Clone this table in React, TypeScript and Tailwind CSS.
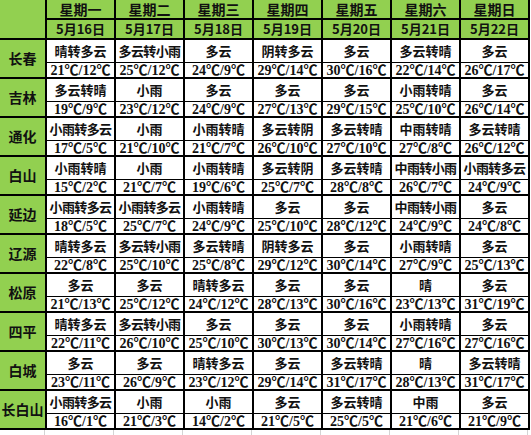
type Day = { week: string; date: string };
type Cell = { w: string; t: string };
type City = { name: string; cells: Cell[] };

const days: Day[] = [
  { week: "星期一", date: "5月16日" },
  { week: "星期二", date: "5月17日" },
  { week: "星期三", date: "5月18日" },
  { week: "星期四", date: "5月19日" },
  { week: "星期五", date: "5月20日" },
  { week: "星期六", date: "5月21日" },
  { week: "星期日", date: "5月22日" },
];

const c = (w: string, t: string): Cell => ({ w, t });

const cities: City[] = [
  {
    name: "长春",
    cells: [
      c("晴转多云", "21℃/12℃"),
      c("多云转小雨", "25℃/12℃"),
      c("多云", "24℃/9℃"),
      c("阴转多云", "29℃/14℃"),
      c("多云", "30℃/16℃"),
      c("多云转晴", "22℃/14℃"),
      c("多云", "26℃/17℃"),
    ],
  },
  {
    name: "吉林",
    cells: [
      c("多云转晴", "19℃/9℃"),
      c("小雨", "23℃/12℃"),
      c("多云", "24℃/9℃"),
      c("多云", "27℃/13℃"),
      c("多云", "29℃/15℃"),
      c("小雨转晴", "25℃/10℃"),
      c("多云", "26℃/14℃"),
    ],
  },
  {
    name: "通化",
    cells: [
      c("小雨转多云", "17℃/5℃"),
      c("小雨", "21℃/10℃"),
      c("小雨转晴", "21℃/7℃"),
      c("多云转阴", "26℃/10℃"),
      c("多云转晴", "27℃/10℃"),
      c("中雨转晴", "27℃/8℃"),
      c("多云转晴", "26℃/12℃"),
    ],
  },
  {
    name: "白山",
    cells: [
      c("小雨转晴", "15℃/2℃"),
      c("小雨", "21℃/7℃"),
      c("小雨转晴", "19℃/6℃"),
      c("多云转阴", "25℃/7℃"),
      c("多云转晴", "28℃/8℃"),
      c("中雨转小雨", "26℃/7℃"),
      c("小雨转多云", "24℃/9℃"),
    ],
  },
  {
    name: "延边",
    cells: [
      c("小雨转多云", "18℃/5℃"),
      c("小雨转多云", "25℃/7℃"),
      c("小雨转晴", "24℃/9℃"),
      c("多云", "25℃/10℃"),
      c("多云", "28℃/12℃"),
      c("中雨转小雨", "24℃/9℃"),
      c("多云", "24℃/8℃"),
    ],
  },
  {
    name: "辽源",
    cells: [
      c("晴转多云", "22℃/8℃"),
      c("多云转小雨", "25℃/10℃"),
      c("多云转晴", "25℃/8℃"),
      c("阴转多云", "29℃/12℃"),
      c("多云", "30℃/14℃"),
      c("小雨转晴", "27℃/9℃"),
      c("多云", "25℃/13℃"),
    ],
  },
  {
    name: "松原",
    cells: [
      c("多云", "21℃/13℃"),
      c("多云", "25℃/12℃"),
      c("晴转多云", "24℃/12℃"),
      c("多云", "28℃/13℃"),
      c("多云", "30℃/16℃"),
      c("晴", "23℃/13℃"),
      c("多云", "31℃/19℃"),
    ],
  },
  {
    name: "四平",
    cells: [
      c("晴转多云", "22℃/11℃"),
      c("多云转小雨", "26℃/10℃"),
      c("多云", "25℃/10℃"),
      c("多云", "30℃/13℃"),
      c("多云", "30℃/14℃"),
      c("小雨转晴", "27℃/16℃"),
      c("多云", "27℃/16℃"),
    ],
  },
  {
    name: "白城",
    cells: [
      c("多云", "23℃/11℃"),
      c("多云", "26℃/9℃"),
      c("晴转多云", "23℃/12℃"),
      c("多云", "29℃/14℃"),
      c("多云转晴", "31℃/17℃"),
      c("晴", "28℃/13℃"),
      c("多云转晴", "31℃/17℃"),
    ],
  },
  {
    name: "长白山",
    cells: [
      c("小雨转多云", "16℃/1℃"),
      c("小雨", "21℃/3℃"),
      c("小雨", "14℃/2℃"),
      c("多云", "21℃/5℃"),
      c("多云转晴", "25℃/5℃"),
      c("中雨", "21℃/6℃"),
      c("多云", "21℃/9℃"),
    ],
  },
];

const cjk = "font-['Noto_Sans_CJK_SC',sans-serif]";
const temp = "font-['Liberation_Serif','Noto_Sans_CJK_SC',serif]";

const App = () => (
  <div className="w-[531px] h-[435px] bg-white overflow-hidden text-[#111]">
    <div className="w-[530px] flex flex-col">
      {/* header */}
      <div className="flex h-[38px]">
        <div className="w-[45px] shrink-0 bg-[#92d050]" />
        {days.map((d, i) => (
          <div
            key={d.week}
            className={`w-[69px] shrink-0 flex flex-col bg-[#92d050] border-l-2 border-black ${
              i === days.length - 1 ? "w-[71px] border-r-2" : ""
            }`}
          >
            <div
              className={`h-[20px] border-b-2 border-black flex items-end justify-center text-[14px] leading-[18px] font-bold ${cjk}`}
            >
              {d.week}
            </div>
            <div
              className={`h-[18px] flex items-center justify-center text-[13px] leading-[18px] font-bold ${cjk}`}
            >
              {d.date}
            </div>
          </div>
        ))}
      </div>

      {/* cities */}
      {cities.map((city) => (
        <div key={city.name} className="flex h-[39px] border-t-2 border-black">
          <div
            className={`w-[45px] shrink-0 bg-[#92d050] flex items-center justify-center text-[14px] font-bold whitespace-nowrap ${cjk}`}
          >
            {city.name}
          </div>
          {city.cells.map((cell, i) => (
            <div
              key={i}
              className={`w-[69px] shrink-0 flex flex-col bg-white border-l-2 border-black ${
                i === city.cells.length - 1 ? "w-[71px] border-r-2" : ""
              }`}
            >
              <div
                className={`h-[23px] border-b border-black flex items-center justify-center text-[13px] font-bold whitespace-nowrap ${
                  cell.w.length > 4 ? "tracking-[-0.6px]" : ""
                } ${cjk}`}
              >
                {cell.w}
              </div>
              <div
                className={`h-[14px] overflow-hidden flex justify-center text-[14px] leading-[15px] font-bold whitespace-nowrap ${temp}`}
              >
                {cell.t}
              </div>
            </div>
          ))}
        </div>
      ))}

      {/* bottom border + sheet grid */}
      <div className="h-[2px] bg-black" />
      <div className="flex h-[5px]">
        <div className="w-[45px] shrink-0 border-r border-[#d4d4d4]" />
        {days.map((d) => (
          <div key={d.date} className="w-[69px] shrink-0 border-r border-[#d4d4d4]" />
        ))}
      </div>
    </div>
  </div>
);

export default App;
